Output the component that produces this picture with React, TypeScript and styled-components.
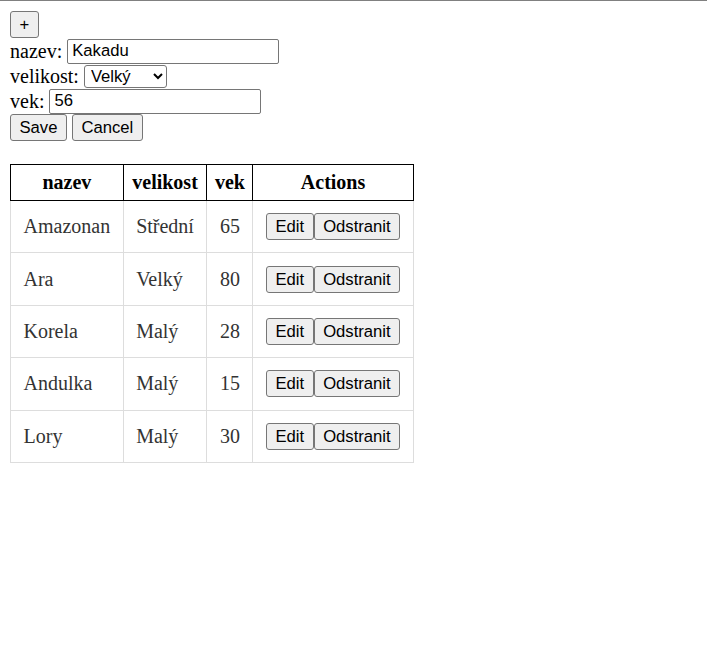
import { useState } from "react";
import styled, { createGlobalStyle } from "styled-components";

const GlobalStyle = createGlobalStyle`
  html, body {
    margin: 0;
    padding: 0;
    background: #fff;
  }
  body {
    font-family: "Liberation Serif", "Times New Roman", serif;
    font-size: 20px;
    color: #000;
  }
`;

const Page = styled.div`
  border-top: 1px solid #808080;
  padding: 10px;
  min-height: 100vh;
  box-sizing: border-box;
`;

const Row = styled.div<{ $h: number }>`
  display: flex;
  align-items: center;
  height: ${(p) => p.$h}px;
  white-space: nowrap;
`;

const Label = styled.span`
  font-size: 20px;
  line-height: 23px;
  margin-right: 5px;
`;

const Button = styled.button`
  font-family: "Liberation Sans", Arial, sans-serif;
  font-size: 16.67px;
  line-height: 19px;
  color: #000;
  background: #efefef;
  border: 1px solid #767676;
  border-radius: 3px;
  padding: 3px 8.5px;
  margin: 0;
  cursor: pointer;
  &:hover {
    background: #e5e5e5;
  }
`;

const TextInput = styled.input`
  font-family: "Liberation Sans", Arial, sans-serif;
  font-size: 16.67px;
  color: #000;
  width: 212px;
  height: 25px;
  box-sizing: border-box;
  padding: 0 4px;
  margin: 0;
  border: 1px solid #767676;
  border-radius: 2px;
  background: #fff;
`;

const Select = styled.select`
  font-family: "Liberation Sans", Arial, sans-serif;
  font-size: 16.67px;
  color: #000;
  width: 83px;
  height: 23px;
  box-sizing: border-box;
  margin: 0;
  padding: 0 2px;
  border: 1px solid #767676;
  border-radius: 3px;
  background: #fff;
`;

const Gap = styled.span`
  display: inline-block;
  width: 5px;
`;

const Table = styled.table`
  border-collapse: collapse;
  margin-top: 23px;
  font-size: 20px;
`;

const Th = styled.th`
  border: 1px solid #000;
  padding: 6px 6px;
  font-weight: bold;
  line-height: 23px;
  text-align: center;
`;

const Td = styled.td`
  border: 1px solid #ddd;
  padding: 12.2px 12.5px;
  line-height: 23px;
  color: #333;
  text-align: left;
  vertical-align: middle;
  white-space: nowrap;
`;

type Bird = { nazev: string; velikost: string; vek: number };

const initial: Bird[] = [
  { nazev: "Amazonan", velikost: "Střední", vek: 65 },
  { nazev: "Ara", velikost: "Velký", vek: 80 },
  { nazev: "Korela", velikost: "Malý", vek: 28 },
  { nazev: "Andulka", velikost: "Malý", vek: 15 },
  { nazev: "Lory", velikost: "Malý", vek: 30 },
];

export default function App() {
  const [birds, setBirds] = useState<Bird[]>(initial);
  const [nazev, setNazev] = useState("Kakadu");
  const [velikost, setVelikost] = useState("Velký");
  const [vek, setVek] = useState("56");

  return (
    <>
      <GlobalStyle />
      <Page>
        <Row $h={27}>
          <Button>+</Button>
        </Row>
        <Row $h={26}>
          <Label>nazev:</Label>
          <TextInput value={nazev} onChange={(e) => setNazev(e.target.value)} />
        </Row>
        <Row $h={24}>
          <Label>velikost:</Label>
          <Select value={velikost} onChange={(e) => setVelikost(e.target.value)}>
            <option>Malý</option>
            <option>Střední</option>
            <option>Velký</option>
          </Select>
        </Row>
        <Row $h={26}>
          <Label>vek:</Label>
          <TextInput value={vek} onChange={(e) => setVek(e.target.value)} />
        </Row>
        <Row $h={27}>
          <Button
            onClick={() =>
              setBirds([...birds, { nazev, velikost, vek: Number(vek) }])
            }
          >
            Save
          </Button>
          <Gap />
          <Button>Cancel</Button>
        </Row>

        <Table>
          <thead>
            <tr>
              <Th>nazev</Th>
              <Th>velikost</Th>
              <Th>vek</Th>
              <Th>Actions</Th>
            </tr>
          </thead>
          <tbody>
            {birds.map((b, i) => (
              <tr key={i}>
                <Td>{b.nazev}</Td>
                <Td>{b.velikost}</Td>
                <Td>{b.vek}</Td>
                <Td>
                  <Button>Edit</Button>
                  <Button onClick={() => setBirds(birds.filter((_, j) => j !== i))}>
                    Odstranit
                  </Button>
                </Td>
              </tr>
            ))}
          </tbody>
        </Table>
      </Page>
    </>
  );
}
